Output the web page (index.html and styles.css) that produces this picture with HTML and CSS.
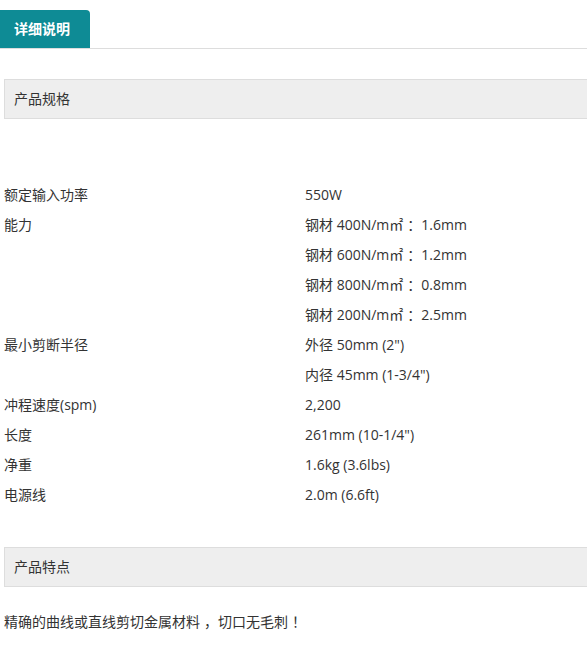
FILE: index.html
```html
<!DOCTYPE html>
<html lang="zh">
<head>
<meta charset="utf-8">
<link rel="stylesheet" href="styles.css">
</head>
<body>
<div class="page">
  <div class="tabs">
    <div class="tab">详细说明</div>
  </div>
  <div class="section-title first">产品规格</div>
  <table class="specs">
    <tr><td class="label">额定输入功率</td><td>550W</td></tr>
    <tr><td class="label">能力</td><td>钢材 400N/m㎡<span class="fw">：</span>1.6mm</td></tr>
    <tr><td class="label"></td><td>钢材 600N/m㎡<span class="fw">：</span>1.2mm</td></tr>
    <tr><td class="label"></td><td>钢材 800N/m㎡<span class="fw">：</span>0.8mm</td></tr>
    <tr><td class="label"></td><td>钢材 200N/m㎡<span class="fw">：</span>2.5mm</td></tr>
    <tr><td class="label">最小剪断半径</td><td>外径 50mm (2")</td></tr>
    <tr><td class="label"></td><td>内径 45mm (1-3/4")</td></tr>
    <tr><td class="label">冲程速度(spm)</td><td>2,200</td></tr>
    <tr><td class="label">长度</td><td>261mm (10-1/4")</td></tr>
    <tr><td class="label">净重</td><td>1.6kg (3.6lbs)</td></tr>
    <tr><td class="label">电源线</td><td>2.0m (6.6ft)</td></tr>
  </table>
  <div class="section-title second">产品特点</div>
  <p class="feature">精确的曲线或直线剪切金属材料<span class="fw">，</span>切口无毛刺<span class="fw">！</span></p>
</div>
</body>
</html>
```
FILE: styles.css
```css
html, body {
  margin: 0;
  padding: 0;
  background: #fff;
}
body {
  font-family: "Open Sans", "Noto Sans CJK SC", sans-serif;
  font-size: 14px;
  color: #333;
}
.page {
  padding-top: 10px;
}
.tabs {
  border-bottom: 1px solid #ddd;
  height: 38px;
}
.tab {
  width: 90px;
  height: 38px;
  box-sizing: border-box;
  background: #0e8b95;
  color: #fff;
  font-family: "Noto Sans CJK SC", sans-serif;
  font-weight: bold;
  line-height: 37px;
  padding-left: 14px;
  border-top-right-radius: 4px;
}
.section-title {
  margin-left: 4px;
  height: 40px;
  box-sizing: border-box;
  border: 1px solid #ddd;
  border-right: none;
  background: #eee;
  line-height: 37px;
  padding-left: 9px;
  font-size: 14px;
}
.section-title.first {
  margin-top: 30px;
}
.specs {
  border-collapse: collapse;
  margin: 61px 0 0 4px;
}
.specs td {
  padding: 0;
  height: 30px;
  line-height: 30px;
  vertical-align: middle;
  white-space: nowrap;
}
.specs td.label {
  width: 301px;
}
.fw {
  padding-left: 4px;
}
.section-title.second {
  margin-top: 37px;
}
.feature {
  margin: 24px 0 0 4px;
  line-height: 21px;
}
```
